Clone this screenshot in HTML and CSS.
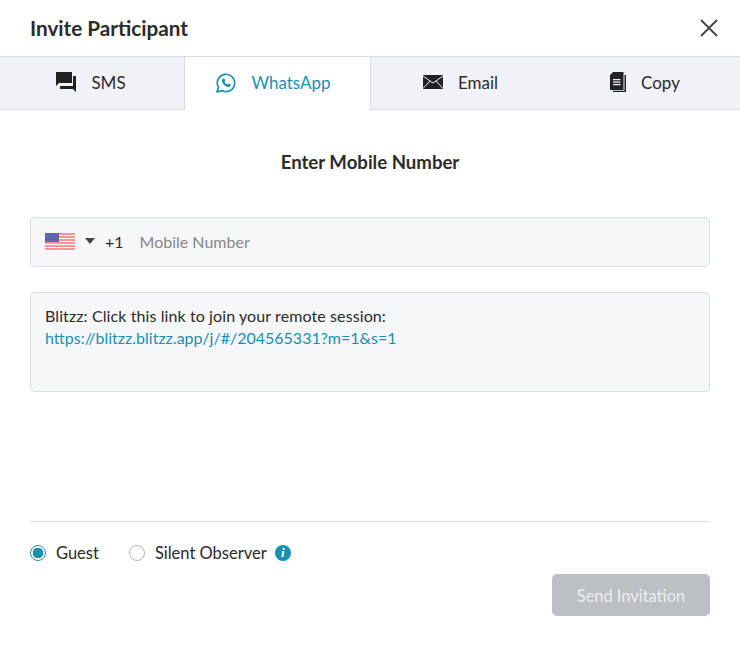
FILE: index.html
```html
<!DOCTYPE html>
<html lang="en">
<head>
    <meta charset="UTF-8">
    <title>Invite Participant</title>
    <link rel="stylesheet" href="styles.css">
</head>
<body>
    <div class="modal">
        <header class="modal-header">
            <h1>Invite Participant</h1>
            <button class="close" aria-label="Close">
                <svg width="18" height="18" viewBox="0 0 18 18"><path d="M1 1L17 17M17 1L1 17" stroke="#444" stroke-width="1.8" fill="none"/></svg>
            </button>
        </header>

        <nav class="tabs">
            <a class="tab">
                <svg width="20" height="20" viewBox="0 0 20 20"><path d="M0 0H16V11H3L0 14Z M17 4H20V20L17 17H4V14H17Z" fill="#222"/></svg>
                <span>SMS</span>
            </a>
            <a class="tab active">
                <svg width="20" height="20" viewBox="0 0 20 20"><path d="M1 19L2.4 14.2A8.7 8.7 0 1 1 5.8 17.6Z" fill="none" stroke="#1a8fb4" stroke-width="1.7" stroke-linejoin="round"/><path d="M7 5.5L8.4 5.4L9.4 7.7L8.5 8.9C9.2 10.2 10.1 11 11.3 11.6L12.5 10.5L14.7 11.6L14.5 13C13.8 14.1 12.5 14.4 11 13.8C8.8 12.9 7.2 11.3 6.3 9.2C5.8 7.8 6 6.4 7 5.5Z" fill="#1a8fb4"/></svg>
                <span>WhatsApp</span>
            </a>
            <a class="tab">
                <svg width="20" height="14" viewBox="0 0 20 14"><rect width="20" height="14" fill="#222"/><path d="M0 1L10 8L20 1M0 13.5L7 6M20 13.5L13 6" fill="none" stroke="#f0f2f7" stroke-width="1"/></svg>
                <span>Email</span>
            </a>
            <a class="tab">
                <svg width="16" height="20" viewBox="0 0 16 20"><path fill-rule="evenodd" d="M3 0H13.5V18H0V3Z M3 7V8.3H10.5V7Z M3 9.5V10.8H10.5V9.5Z M3 12V13.3H10.5V12Z" fill="#222"/><path d="M14.5 3H16V20H3V18.8H14.5Z" fill="#222"/></svg>
                <span>Copy</span>
            </a>
        </nav>

        <main class="modal-body">
            <h2>Enter Mobile Number</h2>

            <div class="field phone">
                <svg class="flag" width="30" height="18" viewBox="0 0 30 18">
                    <defs>
                        <pattern id="stars" width="2" height="2" patternUnits="userSpaceOnUse"><circle cx="1" cy="1" r="0.5" fill="#aab0dc"/></pattern>
                    </defs>
                    <rect width="30" height="18" fill="#fff"/>
                    <path d="M0 1H30M0 4H30M0 7H30M0 10H30M0 13H30M0 16H30" stroke="#f7707a" stroke-width="1.5"/>
                    <rect width="14" height="9" fill="#4b55a3"/>
                    <rect width="14" height="9" fill="url(#stars)"/>
                </svg>
                <span class="caret"></span>
                <span class="code">+1</span>
                <span class="placeholder">Mobile Number</span>
            </div>

            <div class="field message">
                <div class="message-text">Blitzz: Click this link to join your remote session:</div>
                <a>https://blitzz.blitzz.app/j/#/204565331?m=1&amp;s=1</a>
            </div>
        </main>

        <footer class="modal-footer">
            <div class="roles">
                <label class="role"><span class="radio checked"></span>Guest</label>
                <label class="role"><span class="radio"></span>Silent Observer<span class="info">i</span></label>
            </div>
            <div class="actions">
                <button class="send" disabled>Send Invitation</button>
            </div>
        </footer>
    </div>
</body>
</html>
```

FILE: styles.css
```css
* {
    margin: 0;
    padding: 0;
    box-sizing: border-box;
}

body {
    font-family: 'Lato', 'Noto Sans', sans-serif;
    font-size: 16px;
    background-color: #fff;
    color: #2b2b2b;
}

.modal {
    height: 646px;
    display: flex;
    flex-direction: column;
}

/* Header */
.modal-header {
    height: 56px;
    padding: 0 22px 0 30px;
    display: flex;
    justify-content: space-between;
    align-items: center;
}

.modal-header h1 {
    font-size: 20.7px;
    font-weight: 700;
}

.close {
    border: none;
    background: none;
    display: flex;
}

/* Tabs */
.tabs {
    height: 54px;
    display: grid;
    grid-template-columns: 184px 187px 185px 1fr;
    background-color: #f0f2f7;
    border-top: 1px solid #d8dce8;
    border-bottom: 1px solid #d8dce8;
}

.tab {
    display: flex;
    justify-content: center;
    align-items: center;
    gap: 15px;
    padding-right: 6px;
    padding-bottom: 2px;
    font-size: 17px;
}

.tab:first-child {
    padding-right: 2px;
}

.tab.active {
    background-color: #fff;
    color: #1a8fb4;
    margin-bottom: -1px;
    padding-right: 8px;
    border-left: 1px solid #d8dce8;
    border-right: 1px solid #d8dce8;
}

/* Body */
.modal-body {
    padding: 0 30px;
    flex: 1;
}

.modal-body h2 {
    font-size: 18.6px;
    line-height: 22px;
    font-weight: 700;
    text-align: center;
    margin-top: 41px;
    margin-bottom: 44px;
}

.field {
    background-color: #f6f7f9;
    border: 1px solid #d8dce8;
    border-radius: 5px;
    padding: 0 14px;
}

.phone {
    height: 50px;
    padding-bottom: 2px;
    display: flex;
    align-items: center;
}

.flag {
    margin-top: 2px;
}

.caret {
    width: 0;
    height: 0;
    margin-left: 10px;
    border-left: 5px solid transparent;
    border-right: 5px solid transparent;
    border-top: 6px solid #444;
}

.code {
    margin-left: 10px;
}

.placeholder {
    margin-left: 16px;
    color: #888;
}

.message {
    height: 100px;
    margin-top: 25px;
    padding-top: 12px;
    line-height: 22px;
}

.message-text {
    letter-spacing: 0.1px;
}

.message a {
    color: #1a8fb4;
}

/* Footer */
.modal-footer {
    margin: 0 30px;
    padding-top: 21px;
    height: 125px;
    border-top: 1px solid #dcdce6;
}

.roles {
    display: flex;
    gap: 30px;
    font-size: 16.5px;
}

.role {
    display: flex;
    align-items: center;
    gap: 10px;
}

.radio {
    width: 16px;
    height: 16px;
    border: 1px solid #b5b5b5;
    border-radius: 50%;
    background-color: #fff;
}

.radio.checked {
    border: 1.5px solid #1a8fb4;
    background: radial-gradient(circle, #1a8fb4 5px, #fff 5.5px);
}

.info {
    width: 16px;
    height: 16px;
    margin-left: -2px;
    border-radius: 50%;
    background-color: #1a8fb4;
    color: #fff;
    font-size: 13px;
    font-weight: 700;
    font-style: italic;
    font-family: 'Liberation Serif', serif;
    text-align: center;
    line-height: 16px;
}

.actions {
    display: flex;
    justify-content: flex-end;
    margin-top: 11px;
}

.send {
    width: 158px;
    height: 42px;
    border: none;
    border-radius: 5px;
    background-color: #bcbfc4;
    color: #eceef0;
    font-family: inherit;
    font-size: 16.4px;
}
```
